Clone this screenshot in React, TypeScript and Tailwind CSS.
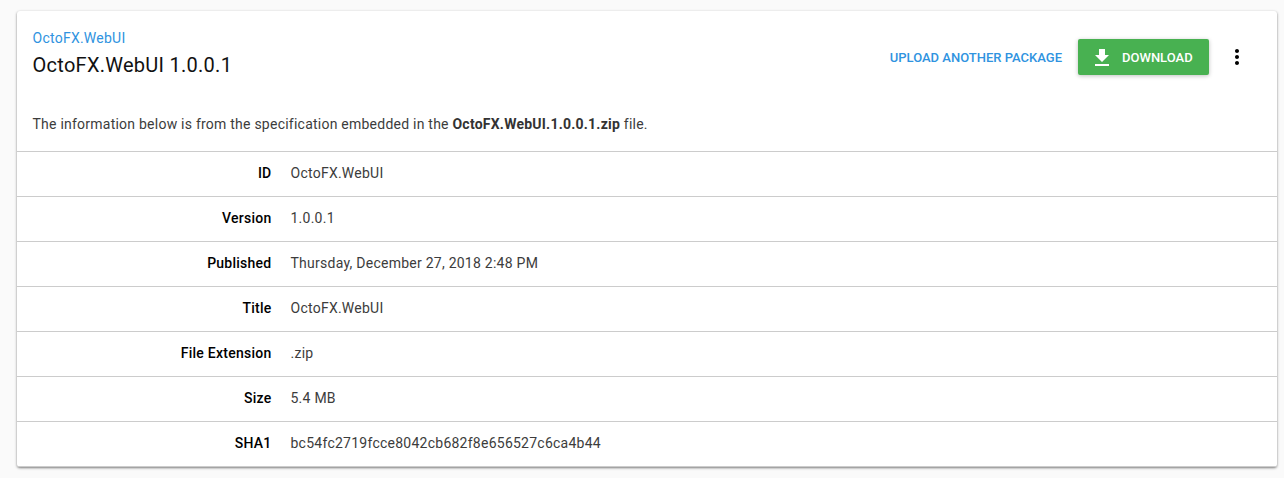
import React from "react";

const rows = [
  ["ID", "OctoFX.WebUI"],
  ["Version", "1.0.0.1"],
  ["Published", "Thursday, December 27, 2018 2:48 PM"],
  ["Title", "OctoFX.WebUI"],
  ["File Extension", ".zip"],
  ["Size", "5.4 MB"],
  ["SHA1", "bc54fc2719fcce8042cb682f8e656527c6ca4b44"],
];

export default function App() {
  return (
    <div className="h-[478px] bg-[#fafafa] pl-[17px] pr-[7px] pt-[11px] font-['Roboto',sans-serif] text-[14px] tracking-[0.25px] text-[#3c3c3c]">
      <main className="h-[456px] rounded-[3px] bg-white shadow-[0_1px_3px_rgba(0,0,0,0.3),0_1px_2px_rgba(0,0,0,0.25)]">
        <header className="flex h-[93px] items-start justify-between pl-[15.5px] pr-7">
          <div className="pt-[17px]">
            <a className="block leading-5 text-[#2f93e0]">OctoFX.WebUI</a>
            <h1 className="mt-1 text-[20px] leading-[26px] tracking-[0.27px] text-[#111]">OctoFX.WebUI 1.0.0.1</h1>
          </div>
          <div className="flex items-center pt-7">
            <button className="mr-4 pt-[2px] text-[13px] font-medium tracking-normal text-[#2f93e0]">UPLOAD ANOTHER PACKAGE</button>
            <button className="flex h-9 w-[131px] items-center rounded-[2px] bg-[#48b151] pl-3 text-[13px] font-medium tracking-normal text-white shadow-[0_1px_4px_rgba(0,0,0,0.25)]">
              <svg className="mr-2 size-6" viewBox="0 0 24 24" fill="currentColor"><path d="M19 10h-4V4H9v6H5l7 7 7-7zM5 19v2h14v-2H5z" /></svg>
              <span className="pt-[2px]">DOWNLOAD</span>
            </button>
            <svg className="ml-4 size-6 text-black" viewBox="0 0 24 24" fill="currentColor"><path d="M12 8c1.1 0 2-.9 2-2s-.9-2-2-2-2 .9-2 2 .9 2 2 2zm0 2c-1.1 0-2 .9-2 2s.9 2 2 2 2-.9 2-2-.9-2-2-2zm0 6c-1.1 0-2 .9-2 2s.9 2 2 2 2-.9 2-2-.9-2-2-2z" /></svg>
          </div>
        </header>
        <p className="h-[47px] pl-[15.5px] pt-[10px] leading-5 tracking-[0.235px]">
          The information below is from the specification embedded in the <strong className="font-bold text-[#333]">OctoFX.WebUI.1.0.0.1.zip</strong> file.
        </p>
        <dl className="border-b border-[#ccc]">
          {rows.map(([label, value]) => (
            <div key={label} className="flex h-[45px] border-t border-[#ccc] pt-[11px] leading-5">
              <dt className="w-[254.5px] text-right font-medium text-black">{label}</dt>
              <dd className="ml-[19px]">{value}</dd>
            </div>
          ))}
        </dl>
      </main>
    </div>
  );
}
